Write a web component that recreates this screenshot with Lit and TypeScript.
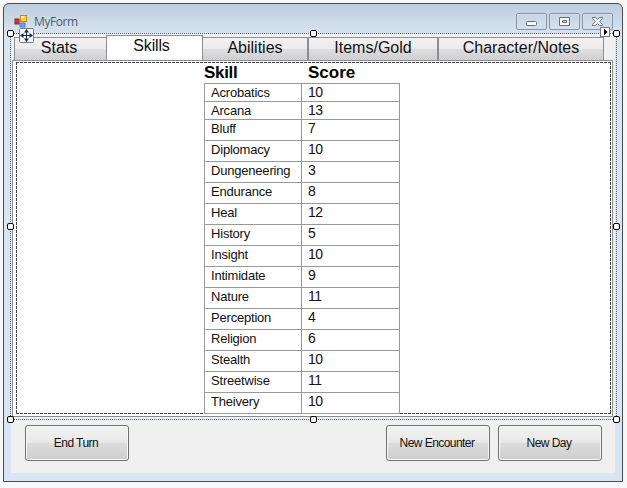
import { LitElement, html, css } from "lit";
import { customElement, property } from "lit/decorators.js";
import { classMap } from "lit/directives/class-map.js";

const SKILLS: [string, number][] = [
  ["Acrobatics", 10], ["Arcana", 13], ["Bluff", 7], ["Diplomacy", 10],
  ["Dungeneering", 3], ["Endurance", 8], ["Heal", 12], ["History", 5],
  ["Insight", 10], ["Intimidate", 9], ["Nature", 11], ["Perception", 4],
  ["Religion", 6], ["Stealth", 10], ["Streetwise", 11], ["Theivery", 10],
];

const TABS = [
  { label: "Stats", key: "stats" },
  { label: "Skills", key: "skills" },
  { label: "Abilities", key: "abilities" },
  { label: "Items/Gold", key: "items" },
  { label: "Character/Notes", key: "notes" },
];

@customElement("skill-table")
export class SkillTable extends LitElement {
  static styles = css`
    :host { display: block; width: 196px; color: #111; }
    .head, .row { display: grid; grid-template-columns: 97px 99px; }
    .head { height: 20px; font-size: 17px; line-height: 20px; font-weight: bold; color: #000; }
    .head span { letter-spacing: -0.3px; }
    .head span:last-child { padding-left: 7px; line-height: 19px; letter-spacing: 0; }
    .body { border-top: 1px solid #999; border-left: 1px solid #999; }
    .row { height: 21px; grid-template-columns: 97px 98px; box-sizing: border-box; }
    .row.short { height: 18px; }
    .name, .score { border-right: 1px solid #999; border-bottom: 1px solid #999; padding-left: 6px; height: 20px; overflow: hidden; }
    .name { font-size: 13px; line-height: 18px; letter-spacing: -0.2px; }
    .score { font-size: 14px; line-height: 17px; letter-spacing: -0.5px; }
    .short .name, .short .score { height: 17px; }
  `;
  render() {
    return html`
      <div class="head"><span>Skill</span><span>Score</span></div>
      <div class="body">
        ${SKILLS.map(([name, score], i) => html`
          <div class=${classMap({ row: true, short: i < 2 })}>
            <div class="name">${name}</div><div class="score">${score}</div>
          </div>`)}
      </div>`;
  }
}

@customElement("form-button")
export class FormButton extends LitElement {
  @property() label = "";
  static styles = css`
    :host { display: block; }
    .btn {
      width: 104px; height: 36px; box-sizing: border-box; padding: 0 2px 0 0;
      border: 1px solid #707070; border-radius: 3px; box-shadow: inset 0 0 0 1px #f8f8f8;
      background: linear-gradient(#f2f2f2 0, #e9e9e9 48%, #dcdcdc 50%, #cecece 100%);
      font: 12px/34px "Liberation Sans", Arial, sans-serif; letter-spacing: -0.55px;
      color: #111; text-align: center; display: block;
    }
  `;
  render() {
    return html`<button class="btn">${this.label}</button>`;
  }
}

@customElement("app-root")
export class AppRoot extends LitElement {
  static styles = css`
    :host {
      display: block; width: 627px; height: 488px; box-sizing: border-box; padding: 3px 0 0 3px;
      background: #f7f7f7; font-family: "Liberation Sans", Arial, sans-serif; overflow: hidden;
    }
    .window {
      position: relative; width: 620px; height: 479px; box-sizing: border-box;
      border: 1px solid #484c52; border-radius: 6px 6px 0 0;
      background: linear-gradient(#bccddd 0, #cbd9e7 15px, #d9e5f1 32px, #d9e5f2 100%);
      padding: 0 7px 8px; display: flex; flex-direction: column;
    }
    .titlebar { height: 29px; display: flex; align-items: flex-start; flex: none; }
    .logo { margin: 10px 0 0 3px; display: block; }
    .title { margin: 9px 0 0 5px; font: 12px/18px "Open Sans", "Noto Sans", sans-serif; color: #4f5d6d; letter-spacing: -0.4px; }
    .controls { margin: 9px 2px 0 auto; display: flex; gap: 2px; }
    .control { width: 31px; height: 17px; box-sizing: border-box; border: 1px solid #8795a7; border-radius: 2px; box-shadow: inset 0 0 0 1px #d4dfeb; display: grid; place-items: center; }
    .control svg { display: block; }
    .client { flex: 1; background: #f0f0f0; display: flex; flex-direction: column; padding: 2px 1px 0 1px; }
    .tabs { display: flex; align-items: flex-end; height: 25px; padding-left: 2px; flex: none; }
    .tab {
      height: 23px; box-sizing: border-box; border: 1px solid #8c8e94; border-bottom: 0;
      background: linear-gradient(#f2f2f2 0, #ebebeb 48%, #dedede 50%, #cfcfcf 100%);
      font-size: 16px; line-height: 19px; text-align: center; color: #111; white-space: nowrap;
    }
    .stats { width: 92px; padding-right: 3px; border-right: 0; }
    .skills { width: 97px; height: 25px; background: #fff; line-height: 19px; padding-right: 6px; letter-spacing: -0.15px; }
    .abilities { width: 105px; border-left: 0; }
    .items { width: 130px; }
    .notes { width: 166px; }
    .page {
      width: 601px; height: 357px; box-sizing: border-box; border: 1px solid #8c8e94; background: #fff;
      padding: 2px 0 0 191px; flex: none; position: relative;
    }
    .dash { position: absolute; left: 3px; top: 1px; right: 1px; bottom: 2px;
      background:
        repeating-linear-gradient(90deg, #444 0 3px, #fff 3px 4px) top / 100% 1px no-repeat,
        repeating-linear-gradient(90deg, #444 0 3px, #fff 3px 4px) bottom / 100% 1px no-repeat,
        repeating-linear-gradient(#444 0 3px, #fff 3px 4px) left / 1px 100% no-repeat,
        repeating-linear-gradient(#444 0 3px, #fff 3px 4px) right / 1px 100% no-repeat;
    }
    skill-table { position: relative; }
    .footer { display: flex; gap: 8px; padding: 8px 12px 0 13px; }
    .push { margin-left: auto; }
    .selection { position: absolute; left: 6px; top: 29px; width: 607px; height: 387px; pointer-events: none;
      background:
        repeating-linear-gradient(90deg, #5b6069 0 1px, transparent 1px 2px) top / 100% 1px no-repeat,
        repeating-linear-gradient(90deg, #5b6069 0 1px, transparent 1px 2px) bottom / 100% 1px no-repeat,
        repeating-linear-gradient(#5b6069 0 1px, transparent 1px 2px) left / 1px 100% no-repeat,
        repeating-linear-gradient(#5b6069 0 1px, transparent 1px 2px) right / 1px 100% no-repeat;
    }
    .grip { position: absolute; width: 7px; height: 7px; box-sizing: border-box; border: 1px solid #000; border-radius: 2px; background: #fff; }
    .l { left: -3px; } .c { left: 300px; } .r { right: -3px; }
    .t { top: -3px; } .m { top: 190px; } .b { bottom: -3px; }
    .move { position: absolute; left: 9px; top: -5px; }
    .smart { position: absolute; left: 590px; top: -6px; }
  `;

  render() {
    const grips = ["l t", "c t", "r t", "l m", "r m", "l b", "c b", "r b"];
    return html`
      <div class="window">
        <div class="titlebar">
          <svg class="logo" width="15" height="14" viewBox="0 0 15 14">
            <rect x="6.5" y="1.5" width="6" height="6" fill="#f8cf45" stroke="#b98a1c" />
            <path d="M7 2h3v2H7z" fill="#fff0a0" />
            <rect x="1" y="5" width="4" height="5" fill="#c33a2c" stroke="#8d2a25" />
            <rect x="6" y="9" width="5" height="4" fill="#6fa0ea" stroke="#4671b8" stroke-width=".8" />
          </svg>
          <div class="title">MyForm</div>
          <div class="controls">
            <div class="control"><svg width="13" height="11" viewBox="0 0 13 11"><rect x="1.5" y="5.5" width="10" height="4" rx="1" fill="#f5f7f9" stroke="#68727e" /></svg></div>
            <div class="control"><svg width="13" height="11" viewBox="0 0 13 11"><path d="M1.5 1.5h10v8h-10z" fill="#f5f7f9" stroke="#68727e" /><path d="M4.500 4.500h4v2h-4z" fill="#c3d1df" stroke="#68727e" /></svg></div>
            <div class="control"><svg width="13" height="11" viewBox="0 0 13 11"><path d="M1.500 1.500H4.500L6.500 3.500 8.500 1.500H11.500V2.500L8.700 5.500 11.500 8.500V9.500H8.500L6.500 7.500 4.500 9.500H1.500V8.500L4.300 5.500 1.500 2.500Z" fill="#f5f7f9" stroke="#68727e" /></svg></div>
          </div>
        </div>
        <div class="client">
          <div class="tabs">${TABS.map((t) => html`<div class="tab ${t.key}">${t.label}</div>`)}</div>
          <div class="page"><div class="dash"></div><skill-table></skill-table></div>
          <div class="footer">
            <form-button label="End Turn"></form-button>
            <form-button class="push" label="New Encounter"></form-button>
            <form-button label="New Day"></form-button>
          </div>
        </div>
        <div class="selection">
          ${grips.map((g) => html`<div class="grip ${g}"></div>`)}
          <svg class="move" width="15" height="15" viewBox="0 0 15 15">
            <rect x=".5" y=".5" width="14" height="14" rx="1" fill="#f1f5fb" stroke="#6d7c94" />
            <path d="M7.500 3v9M3 7.500h9" stroke="#1c2a44" />
            <path d="M7.500 1 10 4.500H5zM7.500 14 10 10.500H5zM1 7.500 4.500 5v5zM14 7.500 10.500 5v5z" fill="#1c2a44" />
          </svg>
          <svg class="smart" width="10" height="10" viewBox="0 0 10 10">
            <rect x=".5" y=".5" width="9" height="9" fill="#fff" stroke="#777" /><path d="M4 1.500v7l3.500-3.500z" fill="#000" />
          </svg>
        </div>
      </div>`;
  }
}
